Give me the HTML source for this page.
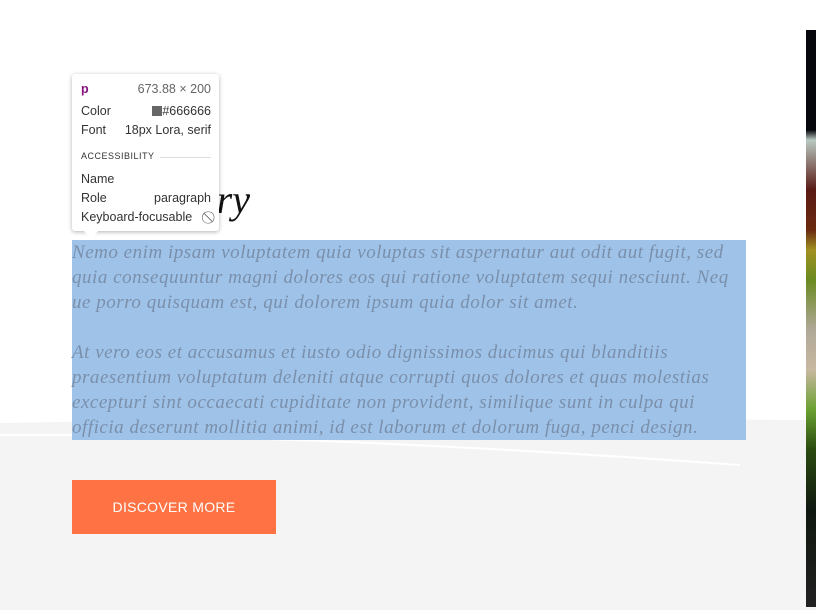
<!DOCTYPE html>
<html><head><style>
body{margin:0;width:816px;height:607px;overflow:hidden;background:#fff;position:relative;font-family:"Liberation Sans",sans-serif}
.gray{position:absolute;left:0;top:428px;width:816px;height:182px;background:#f4f4f4}
.img{position:absolute;left:806px;top:30px;width:10px;height:577px;background:linear-gradient(#05070c 0,#05070c 100px,#b8c8c0 110px,#5a1a14 160px,#6a2a10 200px,#a09020 220px,#6a8a20 250px,#b0a898 300px,#c8b8a0 340px,#6aa030 380px,#2a4a10 420px,#101810 480px,#202020 577px)}
h2{position:absolute;left:72px;top:176px;margin:0;font:italic 40px "Liberation Serif",serif;color:#111;width:178px;text-align:right}
.hl{position:absolute;left:72px;top:240px;width:674px;height:200px;background:#9fc3e8}
.hl p{margin:0;font:italic 19px/25px "Liberation Serif",serif;letter-spacing:.52px;color:#7a8fab;white-space:nowrap}
.btn{position:absolute;left:72px;top:480px;width:204px;height:54px;background:#fe7243;color:#fff;font-size:14px;text-align:center;line-height:54px;letter-spacing:.3px}
.tip{position:absolute;left:72px;top:74px;width:147px;height:157px;background:#fff;border-radius:3px;box-shadow:0 1px 4px rgba(0,0,0,.3);font-size:12.5px;color:#333}
.tip div{position:absolute;left:9px;right:8px}
.tip .r{float:right}
.arrow{position:absolute;left:84px;top:231px;width:0;height:0;border-left:7px solid transparent;border-right:7px solid transparent;border-top:8px solid #fff}
</style></head><body>
<div class="gray"></div>
<svg style="position:absolute;left:0;top:405px" width="806" height="70"><path d="M0 18 Q300 12 806 15 L806 25 Q400 22 0 25Z" fill="#f4f4f4"/><path d="M0 30 Q300 28 740 60" stroke="#fff" stroke-width="2" fill="none"/></svg>
<div class="img"></div>
<h2>Our Story</h2>
<div class="hl"><p>Nemo enim ipsam voluptatem quia voluptas sit aspernatur aut odit aut fugit, sed<br>quia consequuntur magni dolores eos qui ratione voluptatem sequi nesciunt. Neq<br>ue porro quisquam est, qui dolorem ipsum quia dolor sit amet.<br><br>At vero eos et accusamus et iusto odio dignissimos ducimus qui blanditiis<br>praesentium voluptatum deleniti atque corrupti quos dolores et quas molestias<br>excepturi sint occaecati cupiditate non provident, similique sunt in culpa qui<br>officia deserunt mollitia animi, id est laborum et dolorum fuga, penci design.</p></div>
<div class="btn">DISCOVER MORE</div>
<div class="tip">
<div style="top:8px"><b style="color:#881280">p</b><span class="r" style="color:#666">673.88 × 200</span></div>
<div style="top:30px">Color<span class="r"><span style="display:inline-block;width:10px;height:10px;background:#666;vertical-align:-1px"></span>#666666</span></div>
<div style="top:49px">Font<span class="r">18px Lora, serif</span></div>
<div style="top:77px;font-size:9px;letter-spacing:.5px">ACCESSIBILITY<span style="position:absolute;left:79px;right:0;top:6px;border-top:1px solid #ddd"></span></div>
<div style="top:98px">Name</div>
<div style="top:117px">Role<span class="r">paragraph</span></div>
<div style="top:136px">Keyboard-focusable<span class="r" style="color:#666">⃠</span></div>
</div>
<div class="arrow"></div>
</body></html>
